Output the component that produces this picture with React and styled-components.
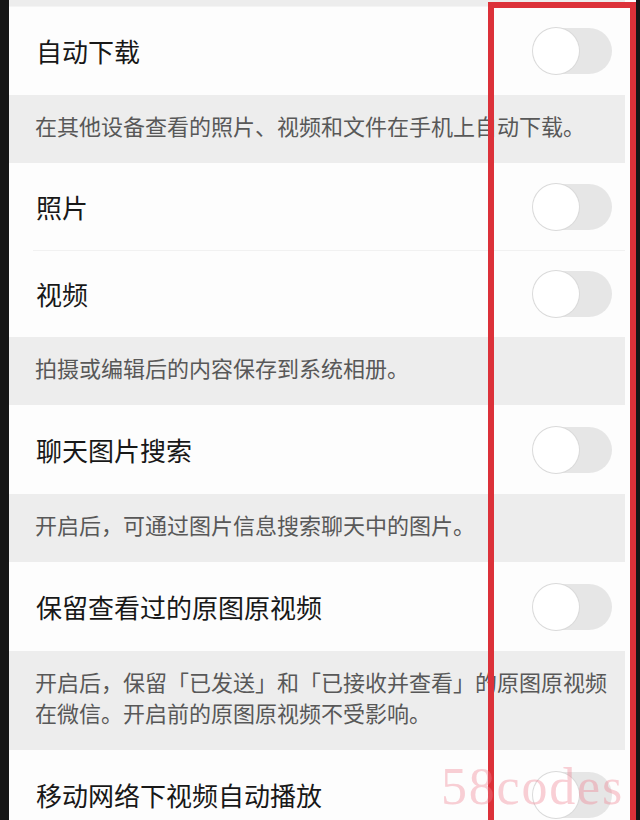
import React from "react";
import styled, { createGlobalStyle } from "styled-components";

const GlobalStyle = createGlobalStyle`
  html, body {
    margin: 0;
    padding: 0;
    background: #161616;
    overflow: hidden;
  }
  body {
    font-family: "Noto Sans CJK SC", "Noto Sans", sans-serif;
  }
`;

const StyledPage = styled.div`
  position: relative;
  display: flex;
  align-items: flex-start;
  width: 640px;
  height: 820px;
  background: #161616;
  overflow: hidden;
`;

const StyledScreen = styled.div`
  display: flex;
  flex-direction: column;
  flex-shrink: 0;
  margin-left: 9px;
  width: 627px;
  min-height: 820px;
  background: #fdfdfd;
  padding-right: 11px;
  box-sizing: border-box;
`;

const StyledTopStub = styled.div`
  flex-shrink: 0;
  height: 7px;
  background: #ededed;
  border-bottom: 1px solid #f4f4f4;
  box-sizing: border-box;
`;

const StyledRow = styled.div`
  display: flex;
  flex-shrink: 0;
  align-items: center;
  justify-content: space-between;
  height: ${props => props.height || 88}px;
  padding: 0 13px 0 27px;
  background: #fdfdfd;
  box-sizing: border-box;
  position: relative;
  ${props =>
    props.divider &&
    `
    &::after {
      content: "";
      position: absolute;
      left: 24px;
      right: 0;
      bottom: 0;
      height: 1px;
      background: #f1f1f1;
    }
  `}
`;

const StyledTitle = styled.span`
  font-size: 26px;
  color: #181818;
  line-height: 1;
`;

const StyledDesc = styled.div`
  flex-shrink: 0;
  background: #ededed;
  padding: 15px 0 22px 26px;
  font-size: 22px;
  line-height: 31px;
  color: #585858;
  white-space: nowrap;
`;

const StyledSwitch = styled.div`
  position: relative;
  width: 79px;
  height: 46px;
  border-radius: 23px;
  background: #e6e6e6;
  flex-shrink: 0;
`;

const StyledKnob = styled.div`
  position: absolute;
  left: 0;
  top: 0;
  width: 46px;
  height: 46px;
  border-radius: 50%;
  background: #ffffff;
  box-shadow: 0 0 0 1px #dadada;
`;

const StyledRedBox = styled.div`
  position: absolute;
  left: 488px;
  top: 2px;
  width: 148px;
  height: 840px;
  border: 6px solid #dc3139;
  box-sizing: border-box;
  pointer-events: none;
`;

const StyledWatermark = styled.div`
  position: absolute;
  left: 441px;
  top: 761px;
  font-family: "Liberation Serif", "Times New Roman", serif;
  font-size: 52px;
  line-height: 52px;
  letter-spacing: 1.8px;
  color: rgba(238, 130, 145, 0.38);
  pointer-events: none;
`;

const Switch = () => (
  <StyledSwitch>
    <StyledKnob />
  </StyledSwitch>
);

const items = [
  { title: "自动下载", desc: ["在其他设备查看的照片、视频和文件在手机上自动下载。"] },
  { title: "照片", divider: true },
  { title: "视频", height: 86, desc: ["拍摄或编辑后的内容保存到系统相册。"] },
  { title: "聊天图片搜索", height: 89, desc: ["开启后，可通过图片信息搜索聊天中的图片。"] },
  {
    title: "保留查看过的原图原视频",
    height: 89,
    desc: ["开启后，保留「已发送」和「已接收并查看」的原图原视频", "在微信。开启前的原图原视频不受影响。"]
  },
  { title: "移动网络下视频自动播放", height: 90 }
];

const App = () => {
  return (
    <StyledPage>
      <GlobalStyle />
      <StyledScreen>
        <StyledTopStub />
        {items.map(item => (
          <React.Fragment key={item.title}>
            <StyledRow height={item.height} divider={item.divider}>
              <StyledTitle>{item.title}</StyledTitle>
              <Switch />
            </StyledRow>
            {item.desc && (
              <StyledDesc>
                {item.desc.map(line => (
                  <div key={line}>{line}</div>
                ))}
              </StyledDesc>
            )}
          </React.Fragment>
        ))}
      </StyledScreen>
      <StyledRedBox />
      <StyledWatermark>58codes</StyledWatermark>
    </StyledPage>
  );
};

export default App;
